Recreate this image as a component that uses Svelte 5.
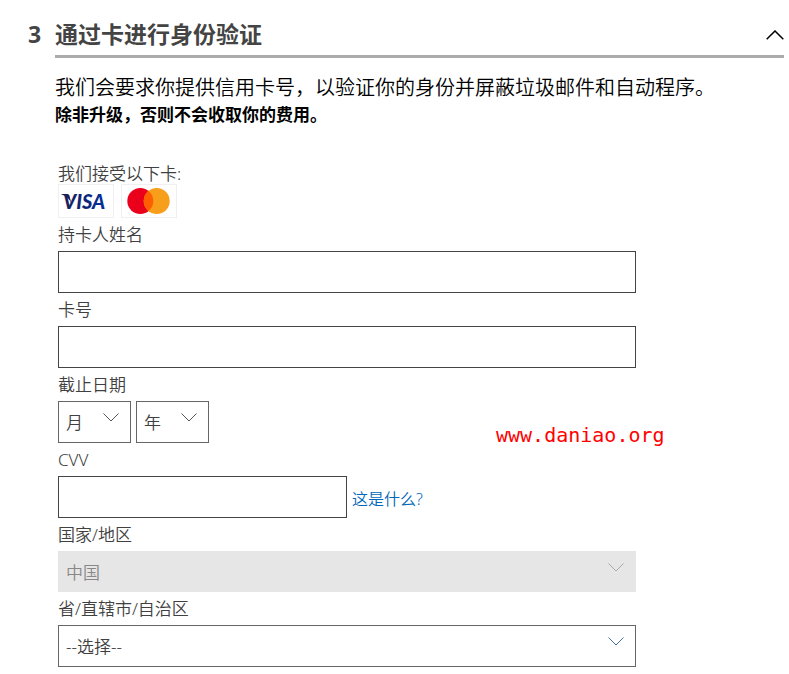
<script>
  let name = $state('');
  let cardNumber = $state('');
  let cvv = $state('');
  let open = $state(true);
</script>

{#snippet chevron()}
  <svg class="chevron" viewBox="0 0 16 9" aria-hidden="true"><path d="M0.5 0.5 8 8 15.5 0.5" /></svg>
{/snippet}

<main>
  <header>
    <span class="step">3</span>
    <div class="bar">
      <h1>通过卡进行身份验证</h1>
      <button class="toggle" type="button" aria-label="折叠" aria-expanded={open} onclick={() => (open = !open)}>
        <svg viewBox="0 0 18 10" aria-hidden="true"><path d="M0.7 9.3 9 1 17.3 9.3" /></svg>
      </button>
    </div>
  </header>

  {#if open}
    <section>
      <p class="intro">我们会要求你提供信用卡号，以验证你的身份并屏蔽垃圾邮件和自动程序。</p>
      <p class="note">除非升级，否则不会收取你的费用。</p>

      <form>
        <p class="accepted">我们接受以下卡:</p>
        <div class="cards">
          <svg viewBox="0 0 56 34" role="img" aria-label="Visa">
            <defs>
              <linearGradient id="visa" x1="0" x2="1">
                <stop offset="0" stop-color="#1a1f5c" />
                <stop offset="1" stop-color="#00309a" />
              </linearGradient>
            </defs>
            <rect x="0.5" y="0.5" width="55" height="33" />
            <path d="M3.5 10H9.5Q11 10 11.4 11.5L13.5 20Q10.500 12.500 3.500 10.600Z" fill="#1a1f5c" />
            <text x="5" y="25" fill="url(#visa)">VISA</text>
          </svg>
          <svg viewBox="0 0 56 34" role="img" aria-label="Mastercard">
            <rect x="0.5" y="0.5" width="55" height="33" />
            <circle cx="19.300" cy="17" r="13" fill="#eb001b" />
            <circle cx="35.700" cy="17" r="13" fill="#f79e1b" />
            <path d="M27.500 6.900A13 13 0 0 1 27.500 27.100A13 13 0 0 1 27.500 6.900Z" fill="#ff5f00" />
          </svg>
        </div>

        <label for="name">持卡人姓名</label>
        <input id="name" type="text" bind:value={name} />

        <label for="number">卡号</label>
        <input id="number" type="text" inputmode="numeric" bind:value={cardNumber} />

        <label for="month">截止日期</label>
        <div class="row">
          <div class="select short">
            <select id="month"><option>月</option></select>
            {@render chevron()}
          </div>
          <div class="select short">
            <select aria-label="年"><option>年</option></select>
            {@render chevron()}
          </div>
        </div>

        <label for="cvv">CVV</label>
        <div class="row">
          <input id="cvv" class="half" type="text" inputmode="numeric" bind:value={cvv} />
          <a href="#cvv">这是什么?</a>
        </div>

        <label for="country">国家/地区</label>
        <div class="select">
          <select id="country" disabled><option>中国</option></select>
          {@render chevron()}
        </div>

        <label for="province">省/直辖市/自治区</label>
        <div class="select">
          <select id="province"><option>--选择--</option></select>
          {@render chevron()}
        </div>
      </form>
    </section>
  {/if}

  <span class="watermark">www.daniao.org</span>
</main>

<style>
  :global(body) {
    margin: 0;
    background: #fff;
  }
  main {
    position: relative;
    padding: 18px 5px 8px 28px;
    font-family: 'Noto Sans', 'Noto Sans CJK SC', sans-serif;
    font-weight: 350;
    font-size: 17px;
    color: #404040;
  }
  header {
    display: flex;
    font-size: 23px;
    line-height: 33px;
    font-weight: 700;
    color: #444;
  }
  .step {
    width: 27px;
    flex: none;
  }
  .bar {
    flex: 1;
    display: flex;
    align-items: center;
    justify-content: space-between;
    padding-bottom: 4px;
    border-bottom: 3px solid #ababab;
  }
  h1,
  p {
    margin: 0;
  }
  h1 {
    font-size: 23px;
    line-height: 33px;
  }
  .toggle {
    display: flex;
    padding: 0;
    border: 0;
    background: none;
  }
  .toggle svg {
    width: 18px;
    height: 10px;
    fill: none;
    stroke: #000;
    stroke-width: 1.5;
  }
  section {
    padding: 16px 0 0 27px;
    color: #000;
  }
  .intro {
    font-size: 20px;
    line-height: 28px;
  }
  .note {
    font-weight: 700;
    line-height: 25px;
  }
  form {
    display: flex;
    flex-direction: column;
    max-width: 578px;
    margin: 37px 0 0 3px;
    color: #404040;
  }
  .accepted {
    line-height: 20px;
  }
  .cards {
    display: flex;
    gap: 7px;
  }
  .cards svg {
    width: 56px;
    height: 34px;
  }
  .cards rect {
    fill: #fff;
    stroke: #f0f0f0;
  }
  .cards text {
    font: italic 900 20px Lato, sans-serif;
  }
  label {
    line-height: 33px;
  }
  input,
  select {
    box-sizing: border-box;
    width: 100%;
    height: 42px;
    margin: 0;
    padding: 0 7px;
    border: 1px solid #444;
    border-radius: 0;
    background: #fff;
    font: inherit;
    color: inherit;
  }
  select {
    display: block;
    appearance: none;
    padding-top: 1px;
    border-color: #666;
  }
  select:disabled {
    height: 41px;
    border-color: #e6e6e6;
    background: #e6e6e6;
    color: #888;
    opacity: 1;
  }
  .row {
    display: flex;
    align-items: center;
    gap: 5px;
  }
  .half {
    width: 50%;
  }
  .select {
    position: relative;
  }
  .short {
    width: 73px;
  }
  .chevron {
    position: absolute;
    top: 12px;
    right: 12px;
    width: 16px;
    height: 9px;
    fill: none;
    stroke: #555;
    pointer-events: none;
  }
  select:disabled + .chevron {
    stroke: #aaa;
  }
  #province + .chevron {
    stroke: #46719c;
  }
  a {
    padding-top: 2px;
    font-size: 16px;
    color: #0067b8;
    text-decoration: none;
  }
  .watermark {
    position: absolute;
    top: 423px;
    left: 496px;
    font: 400 20px/24px 'DejaVu Sans Mono', monospace;
    color: #f00;
  }
</style>
